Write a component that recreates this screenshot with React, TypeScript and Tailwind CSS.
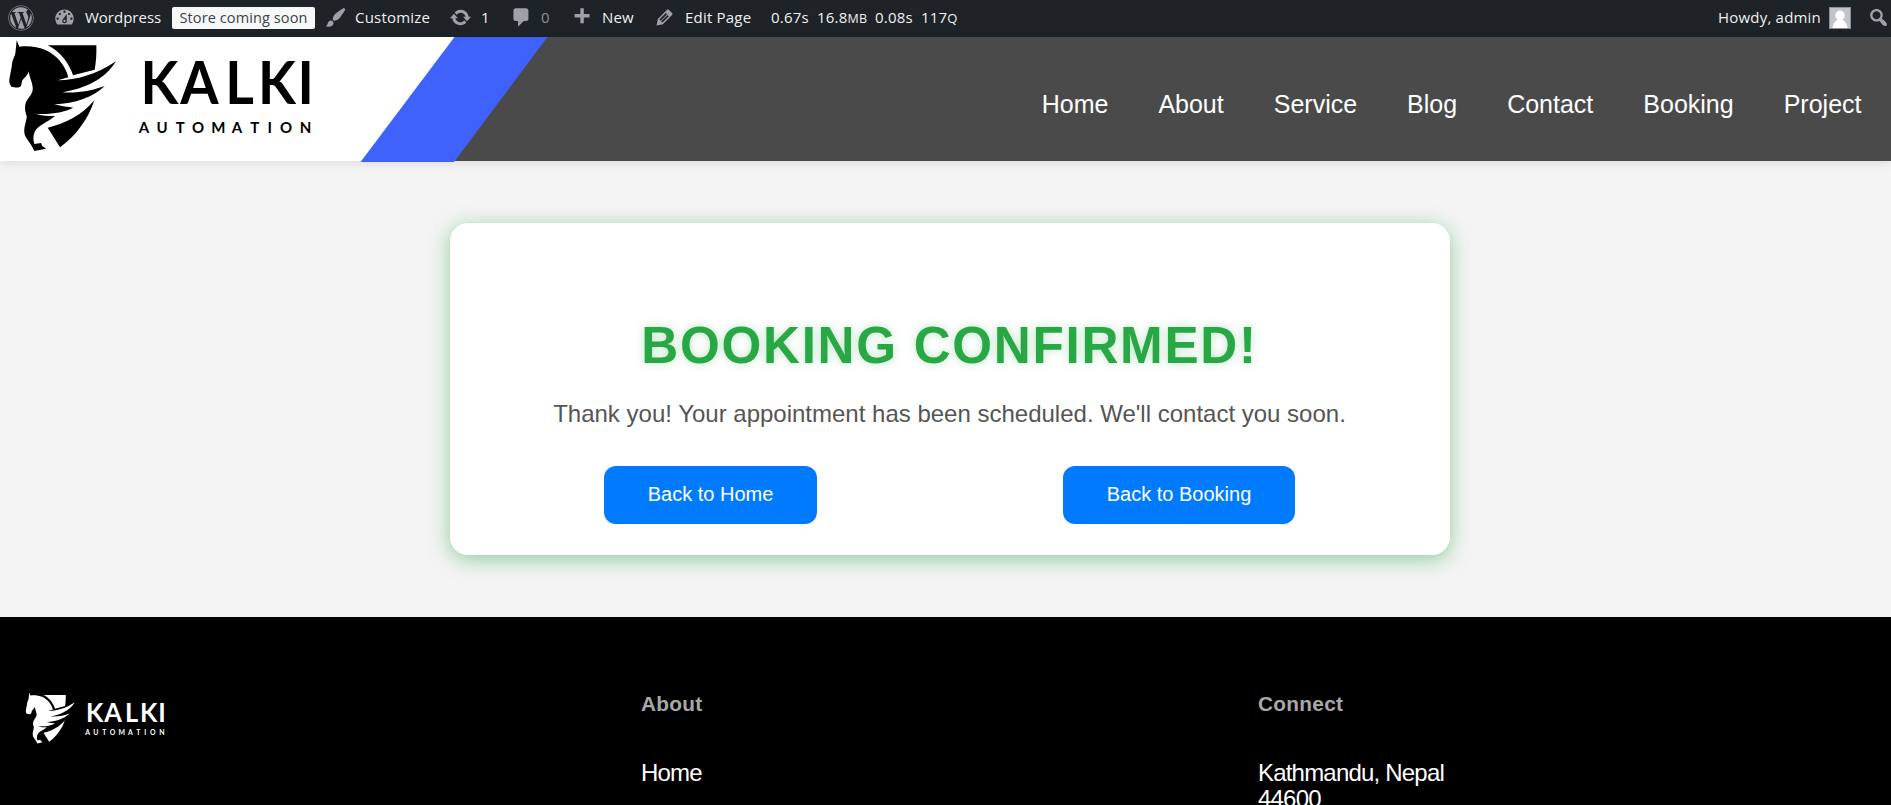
import React from "react";
import { FaWordpress } from "react-icons/fa";

const glyphs = {
  dashboard:
    "M3.76 16h12.48c1.1-1.37 1.76-3.11 1.76-5 0-4.42-3.58-8-8-8s-8 3.58-8 8c0 1.89.66 3.63 1.76 5zM10 4c.55 0 1 .45 1 1s-.45 1-1 1-1-.45-1-1 .45-1 1-1zM6 6c.55 0 1 .45 1 1s-.45 1-1 1-1-.45-1-1 .45-1 1-1zm8 0c.55 0 1 .45 1 1s-.45 1-1 1-1-.45-1-1 .45-1 1-1zm-5.37 5.55L12 7v6c0 1.1-.9 2-2 2s-2-.9-2-2c0-.57.24-1.08.63-1.45zM4 10c.55 0 1 .45 1 1s-.45 1-1 1-1-.45-1-1 .45-1 1-1zm12 0c.55 0 1 .45 1 1s-.45 1-1 1-1-.45-1-1 .45-1 1-1zm-5 3c0-.55-.45-1-1-1s-1 .45-1 1 .45 1 1 1 1-.45 1-1z",
  brush:
    "M18.33 3.57s.27-.8-.31-1.36c-.53-.52-1.22-.24-1.22-.24-.61.3-5.76 3.47-7.67 5.57-.86.96-2.06 3.79-1.09 4.82.92.98 3.96-.17 4.79-1 2.06-2.06 5.21-7.17 5.5-7.79zM1.4 17.65c2.37-1.56 1.46-3.41 3.23-4.64.93-.65 2.22-.62 3.08.29.63.67.8 2.57-.16 3.46-1.57 1.45-4 1.55-6.15.89z",
  update:
    "M10.2 3.28c3.53 0 6.43 2.61 6.92 6h2.08l-3.5 4-3.5-4h2.32c-.45-1.97-2.21-3.45-4.32-3.45-1.45 0-2.73.71-3.54 1.78L4.95 5.66C6.23 4.2 8.11 3.28 10.2 3.28zm-.4 13.44c-3.52 0-6.43-2.61-6.92-6H.8l3.5-4c1.17 1.33 2.33 2.67 3.5 4H5.48c.45 1.97 2.21 3.45 4.32 3.45 1.45 0 2.73-.71 3.54-1.78l1.71 1.95c-1.28 1.46-3.15 2.38-5.25 2.38z",
  comment:
    "M5 2h9c1.1 0 2 .9 2 2v7c0 1.1-.9 2-2 2h-2l-5 5v-5H5c-1.1 0-2-.9-2-2V4c0-1.1.9-2 2-2z",
  plus: "M17 7v3h-5v5H9v-5H4V7h5V2h3v5h5z",
  edit: "M13.89 3.39l2.71 2.72c.46.46.42 1.24.03 1.64l-8.01 8.02-5.56 1.16 1.16-5.58s7.6-7.63 7.99-8.03c.39-.39 1.22-.39 1.68.07zm-2.73 2.79l-5.59 5.61 1.11 1.11 5.54-5.65zm-2.97 8.23l5.58-5.6-1.07-1.08-5.59 5.6z",
  search:
    "M12.14 4.18c1.87 1.87 2.11 4.75.72 6.89.12.1.22.21.36.31.2.16.47.36.81.59.34.24.56.39.66.47.42.31.73.57.94.78.32.32.6.65.84 1 .25.35.44.69.59 1.04.14.35.21.68.18 1-.02.32-.14.59-.36.81s-.49.34-.81.36c-.31.02-.65-.04-.99-.19-.35-.14-.7-.34-1.04-.59-.35-.24-.68-.52-1-.84-.21-.21-.47-.52-.77-.93-.1-.13-.25-.35-.47-.66-.22-.32-.4-.57-.56-.78-.16-.2-.29-.35-.44-.5-2.07 1.09-4.69.76-6.44-.98-2.14-2.15-2.14-5.64 0-7.78 2.15-2.15 5.63-2.15 7.78 0zm-1.41 6.36c1.36-1.37 1.36-3.58 0-4.95-1.37-1.37-3.59-1.37-4.95 0-1.37 1.37-1.37 3.58 0 4.95 1.36 1.37 3.58 1.37 4.95 0z",
};

function Glyph({ name, className = "" }: { name: keyof typeof glyphs; className?: string }) {
  return (
    <svg viewBox="0 0 20 20" className={`h-[23px] w-[23px] shrink-0 fill-[#9ca2a7] ${className}`}>
      <path fillRule="evenodd" d={glyphs[name]} />
    </svg>
  );
}

function Logo({ className }: { className: string }) {
  return (
    <svg viewBox="24 116 912 340" className={className} fill="currentColor" role="img" aria-label="Kalki Automation">
      <path d="M50 120 L58 139 C110 134 150 148 178 180 C192 197 200 212 205 231 L173 240 C230 240 290 222 348 183 C315 237 255 265 187 276 C235 279 280 270 314 257 C280 290 225 310 163 312 C185 318 205 320 220 322 C190 337 150 343 106 340 C125 346 145 347 165 347 C145 364 115 375 105 392 C98 408 100 420 103 431 L123 428 L126 436 L138 445 L103 452 C94 430 78 415 74 403 C69 380 80 365 80 347 C74 330 72 312 82 298 C92 284 99 276 98 262 C97 245 88 232 86 213 C82 228 70 234 66 242 C64 250 65 258 58 260 C50 264 42 259 34 259 C30 252 26 245 28 238 C30 220 35 205 36 190 C38 175 44 170 46 158 Z" />
      <path d="M143 135 H289 C290 160 288 185 284 208 L219 225 C208 190 180 152 143 135 Z" />
      <path d="M283 300 C265 355 230 405 180 441 L143 382 C200 368 245 345 283 300 Z" />
      <g fontFamily="Lato, sans-serif" textAnchor="middle">
        <text
          x="519.500 650.500 781 903.500 997.300"
          y="311.500"
          fontSize="180"
          fontWeight="700"
          transform="scale(.92 1)"
        >
          KALKI
        </text>
        <text x="432 486 541 594 655 711 764 809 858 917" y="397" fontSize="45" fontWeight="700">
          AUTOMATION
        </text>
      </g>
    </svg>
  );
}

function AdminBar() {
  return (
    <div className="flex h-[37px] items-center overflow-hidden bg-[#1d2327] pb-[2px] font-['Open_Sans','Noto_Sans',sans-serif] text-[15px] tracking-[0.2px] whitespace-nowrap text-[#f0f0f1]">
      <div className="flex w-[53px] pl-2">
        <FaWordpress className="size-[26px] text-[#9ca2a7]" />
      </div>
      <div className="flex w-[119px] items-center">
        <Glyph name="dashboard" />
        <span className="ml-[9px] tracking-[0px]">Wordpress</span>
      </div>
      <div className="flex h-[22px] w-[143px] items-center justify-center rounded-[2px] bg-[#f6f7f7] text-[14.5px] tracking-[0.1px] text-[#3c434a]">
        Store coming soon
      </div>
      <div className="ml-[9px] flex w-[125px] items-center">
        <Glyph name="brush" />
        <span className="ml-2">Customize</span>
      </div>
      <div className="flex w-[61px] items-center">
        <Glyph name="update" />
        <span className="ml-[9px]">1</span>
      </div>
      <div className="flex w-[60px] items-center">
        <Glyph name="comment" />
        <span className="ml-2 text-[#8a8f94]">0</span>
      </div>
      <div className="flex w-[83px] items-center">
        <Glyph name="plus" />
        <span className="ml-[9px]">New</span>
      </div>
      <div className="flex w-[118px] items-center">
        <Glyph name="edit" />
        <span className="ml-[9px]">Edit Page</span>
      </div>
      <span className="w-[46px]">0.67s</span>
      <span className="w-[58px]">
        16.8<span className="text-[12.5px]">MB</span>
      </span>
      <span className="w-[46px]">0.08s</span>
      <span>
        117<span className="text-[13px]">Q</span>
      </span>
      <div className="ml-auto flex items-center">
        <span>Howdy, admin</span>
        <span className="ml-2 flex size-[22px] border border-[#8c8f94] bg-[#c3c4c7]">
          <svg viewBox="0 0 20 20" className="size-5 fill-white">
            <ellipse cx="10" cy="7.5" rx="4.6" ry="5" />
            <path d="M2.5 20 C3 15 6 13 7.5 11.5 H12.500 C14 13 17 15 17.500 20 Z" />
          </svg>
        </span>
        <Glyph name="search" className="mr-px ml-4" />
      </div>
    </div>
  );
}

const links = ["Home", "About", "Service", "Blog", "Contact", "Booking", "Project"];

function Header() {
  return (
    <header className="flex h-[124px] items-center justify-between bg-[#4a4a4a] shadow-[0_2px_10px_rgba(0,0,0,0.1)]">
      <div className="relative h-[124px] w-[548px]">
        <div className="h-[124px] w-[500px] bg-white pt-[2px] pl-2 [clip-path:polygon(0_0,456px_0,363px_100%,0_100%)]">
          <Logo className="h-[113.3px] w-[304px] text-black" />
        </div>
        <div className="absolute top-0 left-0 h-[125px] w-[548px] bg-[#4062fc] [clip-path:polygon(454.5px_0,547.5px_0,454px_100%,360.5px_100%)]" />
      </div>
      <nav className="flex gap-[50px] pt-[10px] pr-[29.5px] text-[25px] leading-[30px] text-white">
        {links.map((l) => (
          <a key={l} href="#">
            {l}
          </a>
        ))}
      </nav>
    </header>
  );
}

export default function App() {
  return (
    <div className="h-[805px] overflow-hidden bg-[#f4f4f4] font-['Liberation_Sans',Arial,sans-serif]">
      <AdminBar />
      <Header />
      <main className="flex justify-center py-[62px] pl-[9px]">
        <section className="h-[332px] w-[1000px] rounded-[18px] bg-white pt-[93px] pr-8 pl-[31px] text-center shadow-[0_4px_20px_rgba(40,167,69,0.5)]">
          <h1 className="text-[51.2px] leading-[60px] font-bold tracking-[1.7px] text-[#28a745] [text-shadow:0_0_10px_rgba(40,167,69,0.3)]">
            BOOKING CONFIRMED!
          </h1>
          <p className="mt-[23px] text-[24px] leading-[30px] text-[#555]">
            Thank you! Your appointment has been scheduled. We'll contact you soon.
          </p>
          <div className="mt-[37px] flex justify-around text-[20px] leading-[24px] text-white">
            <a href="#" className="flex h-[58px] w-[213px] items-start justify-center rounded-[12px] bg-[#007bff] pt-4">
              Back to Home
            </a>
            <a href="#" className="flex h-[58px] w-[232px] items-start justify-center rounded-[12px] bg-[#007bff] pt-4">
              Back to Booking
            </a>
          </div>
        </section>
      </main>
      <footer className="grid h-[188px] grid-cols-[616px_617px_1fr] overflow-hidden bg-black pt-[75px] pl-[25px] text-white">
        <div>
          <Logo className="h-[52px] w-[140px]" />
        </div>
        <div className="text-[24px] leading-[26px] tracking-[-0.8px]">
          <h2 className="text-[20.8px] leading-[23px] font-bold tracking-[0.3px] text-[#a8a8a8]">About</h2>
          <p className="mt-[45px]">Home</p>
        </div>
        <div className="text-[24px] leading-[26px] tracking-[-0.8px]">
          <h2 className="text-[20.8px] leading-[23px] font-bold tracking-[0.3px] text-[#a8a8a8]">Connect</h2>
          <p className="mt-[45px]">
            Kathmandu, Nepal
            <br />
            44600
          </p>
        </div>
      </footer>
    </div>
  );
}
